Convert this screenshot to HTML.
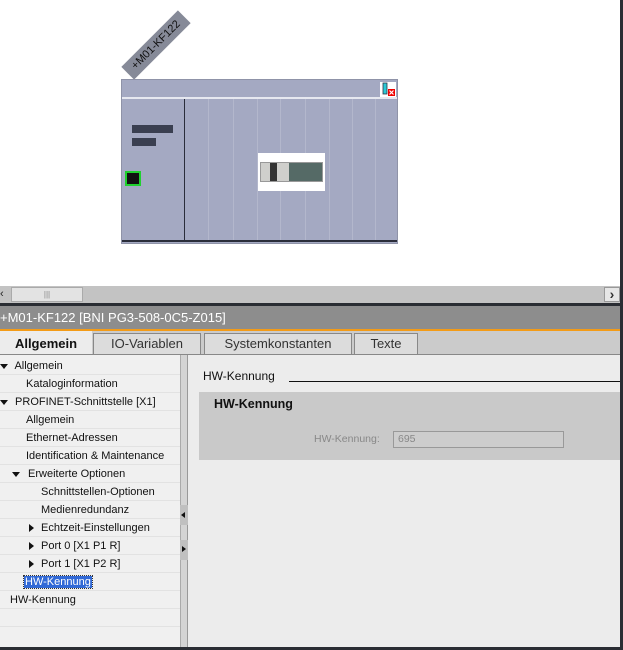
<!DOCTYPE html>
<html><head><meta charset="utf-8"><style>
*{margin:0;padding:0;box-sizing:border-box}
body{width:623px;height:650px;overflow:hidden;position:relative;background:#fff;font-family:"Liberation Sans",sans-serif}
.a{position:absolute}
.row{position:absolute;left:0;width:180px;height:18px;border-bottom:1px solid #e2e2e2;font-size:11px;line-height:19px;color:#111;white-space:nowrap}
.tri{display:inline-block;width:0;height:0;vertical-align:middle}
.down{border-left:4px solid transparent;border-right:4px solid transparent;border-top:5px solid #111}
.right{border-top:4px solid transparent;border-bottom:4px solid transparent;border-left:5px solid #111}
.tab{position:absolute;top:333px;height:21px;background:#dcdcdc;border:1px solid #888;border-bottom:none;font-size:13px;color:#333;text-align:center;line-height:20px}
</style></head><body>
<!-- canvas -->
<div class="a" style="left:620px;top:0;width:3px;height:650px;background:#2a2d33"></div>
<div class="a" style="left:116px;top:36px;width:80px;height:18px;background:#868a98;transform:rotate(-45deg);font-size:11px;line-height:18px;text-align:center;color:#111">+M01-KF122</div>
<div class="a" style="left:121px;top:79px;width:277px;height:165px;background:#a4a9c2;border:1px solid #8f93a8"></div>
<div class="a" style="left:122px;top:97px;width:275px;height:2px;background:#e6e8f0"></div>
<div class="a" style="left:184px;top:99px;width:1px;height:142px;background:#2a2d3a"></div>
<div class="a" style="left:122px;top:240px;width:275px;height:2px;background:#2a2d3a"></div>
<div class="a" style="left:208px;top:99px;width:1px;height:141px;background:#b3b7cc"></div>
<div class="a" style="left:233px;top:99px;width:1px;height:141px;background:#b3b7cc"></div>
<div class="a" style="left:257px;top:99px;width:1px;height:141px;background:#b3b7cc"></div>
<div class="a" style="left:280px;top:99px;width:1px;height:141px;background:#b3b7cc"></div>
<div class="a" style="left:305px;top:99px;width:1px;height:141px;background:#b3b7cc"></div>
<div class="a" style="left:329px;top:99px;width:1px;height:141px;background:#b3b7cc"></div>
<div class="a" style="left:352px;top:99px;width:1px;height:141px;background:#b3b7cc"></div>
<div class="a" style="left:375px;top:99px;width:1px;height:141px;background:#b3b7cc"></div>
<div class="a" style="left:132px;top:125px;width:41px;height:8px;background:#3a3f50"></div>
<div class="a" style="left:132px;top:138px;width:24px;height:8px;background:#3a3f50"></div>
<div class="a" style="left:125px;top:171px;width:16px;height:15px;background:#1fd12e"></div>
<div class="a" style="left:127px;top:173px;width:12px;height:11px;background:#111"></div>
<div class="a" style="left:380px;top:82px;width:16px;height:15px;background:#fff"></div>
<svg class="a" style="left:380px;top:82px" width="16" height="15"><rect x="3" y="1" width="4" height="11" fill="#2cc9d4" stroke="#334" stroke-width=".8"/><rect x="8" y="7" width="7" height="7" fill="#e00"/><path d="M9.5 8.5l4 4M13.5 8.5l-4 4" stroke="#fff" stroke-width="1.2"/></svg>
<div class="a" style="left:258px;top:153px;width:67px;height:38px;background:#fff"></div>
<div class="a" style="left:260px;top:162px;width:63px;height:20px;background:#cfcfcc;border:1px solid #999"></div>
<div class="a" style="left:270px;top:163px;width:7px;height:18px;background:#333"></div>
<div class="a" style="left:289px;top:163px;width:33px;height:18px;background:#556a66"></div>
<!-- scrollbar -->
<div class="a" style="left:0;top:286px;width:620px;height:17px;background:#c3c3c3"></div>
<div class="a" style="left:0;top:287px;width:10px;height:15px;font-size:11px;line-height:15px;color:#222">&lsaquo;</div>
<div class="a" style="left:11px;top:287px;width:72px;height:15px;background:#e3e3e3;border:1px solid #aaa;font-size:8px;text-align:center;line-height:13px;color:#888">|||</div>
<div class="a" style="left:604px;top:287px;width:16px;height:15px;background:#e6e6e6;border:1px solid #999;font-size:14px;font-weight:bold;text-align:center;line-height:13px;color:#333">&rsaquo;</div>
<div class="a" style="left:0;top:303px;width:623px;height:3px;background:#2a2d33"></div>
<!-- title -->
<div class="a" style="left:0;top:306px;width:620px;height:23px;background:#8d8d8d;color:#fff;font-size:13px;line-height:23px">+M01-KF122 [BNI PG3-508-0C5-Z015]</div>
<div class="a" style="left:0;top:329px;width:620px;height:2px;background:#f39b17"></div>
<div class="a" style="left:0;top:331px;width:620px;height:24px;background:#cbcbcb"></div>
<div class="tab" style="left:0;width:92px;background:#ececec;color:#111;font-weight:bold;border:none;height:24px;top:331px;line-height:26px">Allgemein</div>
<div class="tab" style="left:93px;width:108px">IO-Variablen</div>
<div class="tab" style="left:204px;width:148px">Systemkonstanten</div>
<div class="tab" style="left:354px;width:64px">Texte</div>
<div class="a" style="left:0;top:354px;width:620px;height:1px;background:#888"></div>
<!-- tree -->
<div class="a" style="left:0;top:355px;width:180px;height:292px;background:#f0f0f0"></div>
<div class="row" style="top:357px"><span class="tri down" style="margin-right:4px"></span> Allgemein</div>
<div class="row" style="top:375px;padding-left:26px">Kataloginformation</div>
<div class="row" style="top:393px"><span class="tri down" style="margin-right:4px"></span> PROFINET-Schnittstelle [X1]</div>
<div class="row" style="top:411px;padding-left:26px">Allgemein</div>
<div class="row" style="top:429px;padding-left:26px">Ethernet-Adressen</div>
<div class="row" style="top:447px;padding-left:26px">Identification &amp; Maintenance</div>
<div class="row" style="top:465px;padding-left:12px"><span class="tri down" style="margin-right:5px"></span> Erweiterte Optionen</div>
<div class="row" style="top:483px;padding-left:41px">Schnittstellen-Optionen</div>
<div class="row" style="top:501px;padding-left:41px">Medienredundanz</div>
<div class="row" style="top:519px;padding-left:29px"><span class="tri right" style="margin-right:7px"></span>Echtzeit-Einstellungen</div>
<div class="row" style="top:537px;padding-left:29px"><span class="tri right" style="margin-right:7px"></span>Port 0 [X1 P1 R]</div>
<div class="row" style="top:555px;padding-left:29px"><span class="tri right" style="margin-right:7px"></span>Port 1 [X1 P2 R]</div>
<div class="row" style="top:573px;padding-left:24px"><span style="background:#3169d6;color:#fff;outline:1px dotted #333;padding:0 1px">HW-Kennung</span></div>
<div class="row" style="top:591px;padding-left:10px">HW-Kennung</div>
<div class="row" style="top:609px"></div>
<div class="row" style="top:627px;border:none"></div>
<div class="a" style="left:180px;top:355px;width:8px;height:292px;background:#d4d4d4;border-left:1px solid #aaa;border-right:1px solid #999"></div>
<div class="a" style="left:180px;top:505px;width:8px;height:20px;background:#c0c0c0"></div>
<div class="a" style="left:181px;top:512px;width:0;height:0;border-top:3px solid transparent;border-bottom:3px solid transparent;border-right:4px solid #111"></div>
<div class="a" style="left:180px;top:540px;width:8px;height:20px;background:#c0c0c0"></div>
<div class="a" style="left:182px;top:546px;width:0;height:0;border-top:3px solid transparent;border-bottom:3px solid transparent;border-left:4px solid #111"></div>
<!-- right panel -->
<div class="a" style="left:188px;top:355px;width:432px;height:292px;background:#ececec"></div>
<div class="a" style="left:203px;top:369px;font-size:12px;color:#111">HW-Kennung</div>
<div class="a" style="left:289px;top:381px;width:331px;height:1px;background:#111"></div>
<div class="a" style="left:199px;top:392px;width:421px;height:68px;background:#c9c9c9"></div>
<div class="a" style="left:214px;top:397px;font-size:12.5px;font-weight:bold;color:#111">HW-Kennung</div>
<div class="a" style="left:314px;top:433px;font-size:10.5px;color:#888">HW-Kennung:</div>
<div class="a" style="left:393px;top:431px;width:171px;height:17px;border:1px solid #999;background:#cdcdcd;font-size:10.5px;color:#888;line-height:15px;padding-left:4px">695</div>
<div class="a" style="left:0;top:647px;width:623px;height:3px;background:#2a2d33"></div>
</body></html>
